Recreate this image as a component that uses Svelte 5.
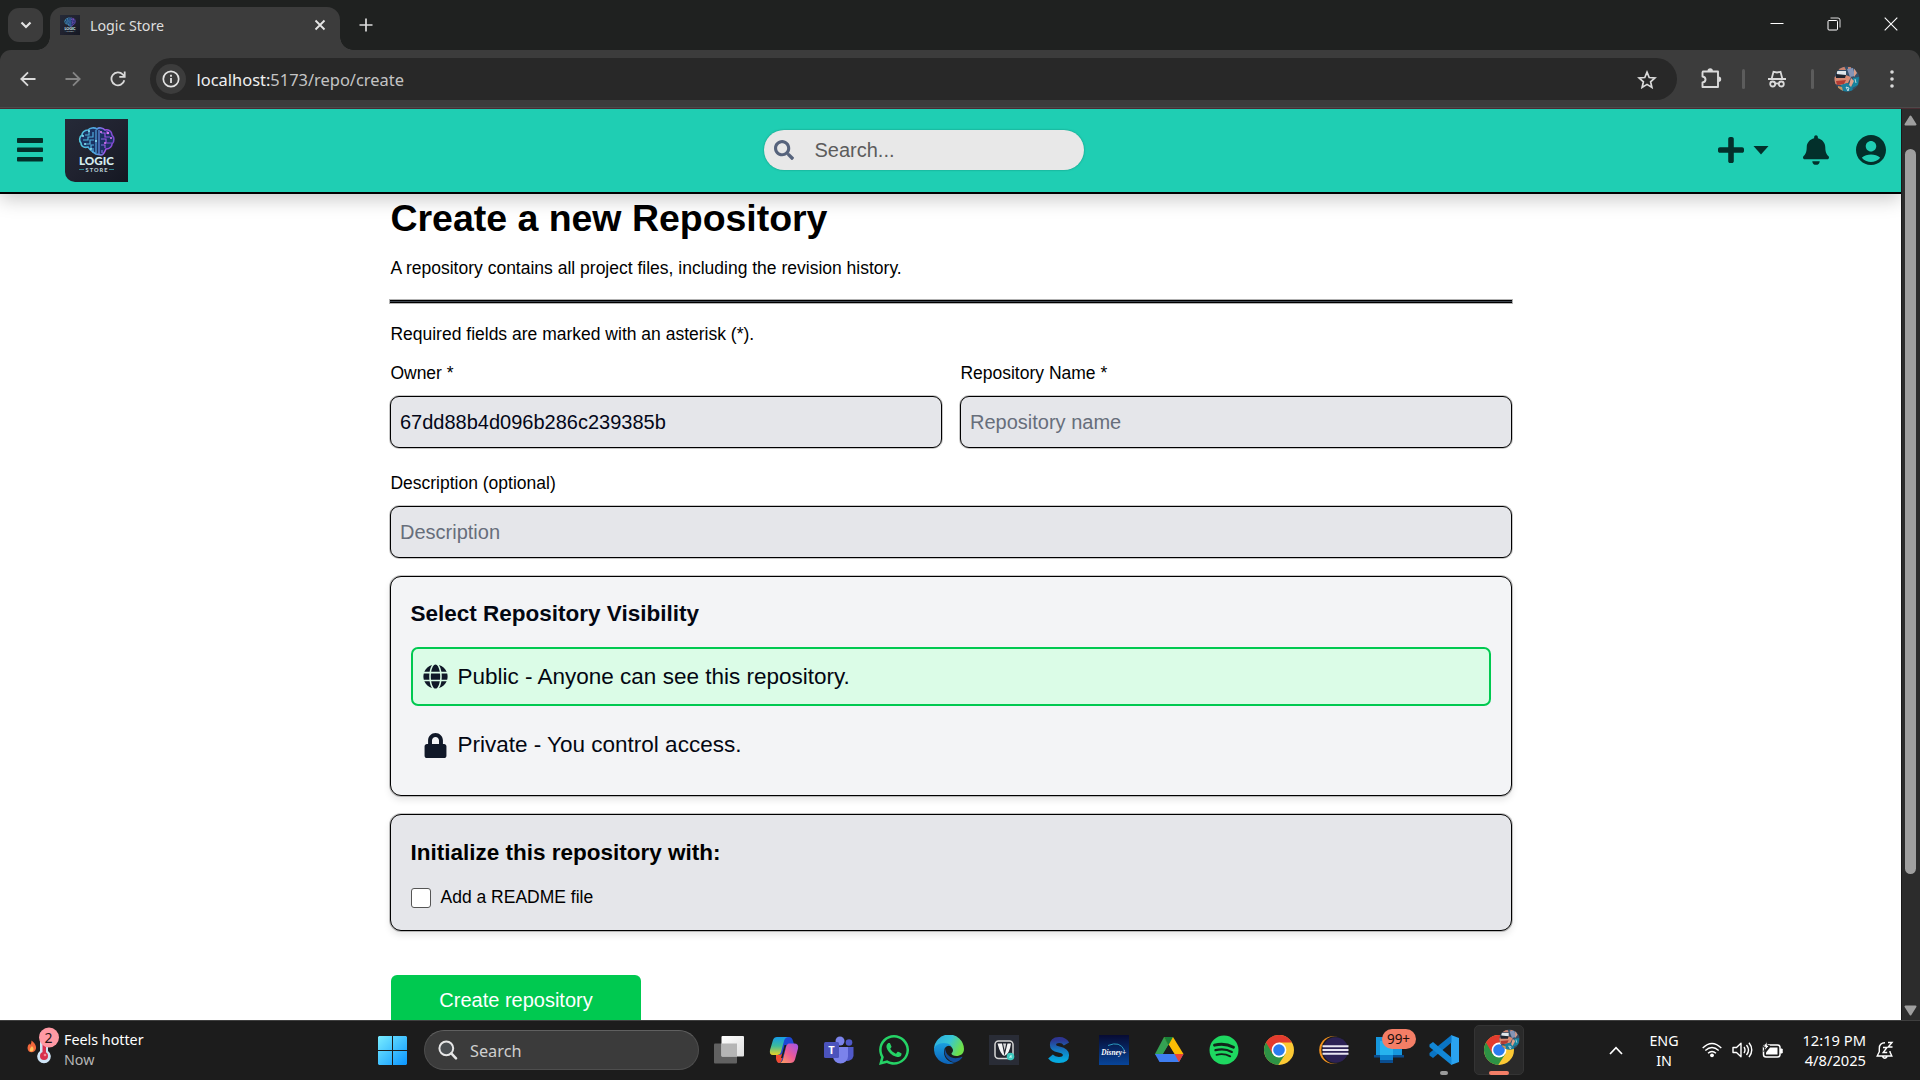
<script>
  const apps = ['taskview', 'copilot', 'teams', 'whatsapp', 'edge', 'jio', 's', 'disney', 'drive', 'spotify', 'chrome', 'eclipse', 'phone', 'vscode', 'chromeActive'];
  let owner = $state('67dd88b4d096b286c239385b');
  let repoName = $state('');
  let description = $state('');
  let readme = $state(false);
</script>

{#snippet brain()}
  <svg class="fill" viewBox="0 0 63 63">
    <defs>
      <linearGradient id="lbg" x1="0" y1="0" x2="1" y2="1"><stop offset="0" stop-color="#252a38" /><stop offset=".5" stop-color="#20222f" /><stop offset="1" stop-color="#141722" /></linearGradient>
      <linearGradient id="bg1" x1="0" y1="0" x2="1" y2="0"><stop offset="0" stop-color="#4fc3d9" /><stop offset=".5" stop-color="#4f9fe0" /><stop offset=".75" stop-color="#a04fe6" /><stop offset="1" stop-color="#7a4ad0" /></linearGradient>
    </defs>
    <rect width="63" height="63" fill="url(#lbg)" />
    <path d="M32 10c-3-2-7-1-9 1-4 0-6 3-6 5-3 2-3 6-1 8 0 4 4 5 7 4 2 4 5 5 8 7l5 1c3 0 4-4 5-6 4 0 6-3 6-5 3-3 2-7 0-9 0-4-4-6-7-5-2-2-6-3-8-1z" fill="#1b3262" stroke="url(#bg1)" stroke-width="1.6" />
    <g fill="none" stroke="url(#bg1)" stroke-width="1.2">
      <path d="M31 11v23M34 11v24M28 13v5h-5v3h-5M29 21h-4v4h-5M29 26h-3v4M24 12v4h-4M36 14h4v4h5M36 20h5v4h6M36 26h4v3M42 12v3M37 31v3M28 29v5" />
    </g>
    <g fill="#8fe4f5"><circle cx="18" cy="17" r="1" /><circle cx="20" cy="25" r="1" /><circle cx="24" cy="12" r="1" /><circle cx="26" cy="30" r="1" /><circle cx="31" cy="22" r="1" /></g>
    <g fill="#e07af7"><circle cx="36" cy="13" r="1.1" /><circle cx="43" cy="14" r="1.2" /><circle cx="46" cy="19" r="1" /><circle cx="40" cy="24" r="1" /></g>
    <text x="31.5" y="46.3" text-anchor="middle" textLength="35" lengthAdjust="spacingAndGlyphs" font-family="Lato, sans-serif" font-weight="900" font-size="10.5" fill="#d5edf0">LOGIC</text>
    <text x="31.5" y="52.6" text-anchor="middle" textLength="22" font-family="Lato, sans-serif" font-weight="900" font-size="5.6" fill="#b9ced3">STORE</text>
    <path d="M14 50.5h5M44 50.5h5" stroke="#2e8791" stroke-width="1" />
  </svg>
{/snippet}

{#snippet avatar()}
  <svg class="fill" viewBox="0 0 26 26">
    <defs><clipPath id="av"><circle cx="13" cy="13" r="12.5" /></clipPath></defs>
    <g clip-path="url(#av)">
      <rect width="26" height="26" fill="#35506a" />
      <path d="M0 11l9-3 8 3-3 6-6 2-8-1z" fill="#d98a72" />
      <path d="M3 5h9v4H3z" fill="#dfe6ea" /><path d="M2 8l10 1-1 3H2z" fill="#20252f" />
      <path d="M5 0h5l2 4H4zM14 1h3v4h-3z" fill="#c9826d" />
      <path d="M13 3l6-1 2 8-5 1z" fill="#8594b6" /><path d="M20 2l3 5-3 4z" fill="#d99b86" />
      <path d="M2 15l10-1-2 4-7 1z" fill="#b23c34" /><path d="M7 19l6-2 5 2 1 7H8z" fill="#1a7f9d" />
      <path d="M19 12l6-1-1 8-6 3z" fill="#16849f" /><path d="M17 12l3 3-3 6-2-2z" fill="#dda18b" />
      <path d="M4 20l4 1 1 4H4z" fill="#c9975f" /><path d="M12 21l3 1-1 3zM21 13l1 4" stroke="#e5eef0" fill="none" stroke-width=".8" />
    </g>
  </svg>
{/snippet}

{#snippet chrome()}
  <circle cx="15" cy="15" r="15" fill="#fcc934" />
  <path d="M15 15L2 7.5A15 15 0 0 0 14.2 30L21.5 18.8z" fill="#2d9245" />
  <path d="M15 15L2 7.5A15 15 0 0 1 28 7.5H15z" fill="#e33b2e" />
  <path d="M2 7.5L8.5 18.7 15 15V7.5z" fill="#e33b2e" />
  <circle cx="15" cy="15" r="7.4" fill="#fff" /><circle cx="15" cy="15" r="5.8" fill="#2b7cf0" />
{/snippet}

<div class="screen">
  <header class="tabstrip">
    <button class="tabsearch" aria-label="Search tabs"><svg width="12" height="8" viewBox="0 0 12 8"><path d="M1.5 1.5L6 6l4.500-4.500" fill="none" stroke="#e3e3e3" stroke-width="2.200" /></svg></button>
    <div class="tab">
      <span class="favicon">{@render brain()}</span>
      <span class="tabtitle">Logic Store</span>
      <svg width="12" height="12" viewBox="0 0 12 12"><path d="M1.500 1.500l9 9M10.500 1.500l-9 9" stroke="#e6e6e6" stroke-width="1.800" /></svg>
    </div>
    <svg class="newtab" width="14" height="14" viewBox="0 0 14 14"><path d="M7 .500v13M.500 7h13" stroke="#dcdcdc" stroke-width="1.700" /></svg>
    <div class="winbtns">
      <svg width="14" height="14" viewBox="0 0 14 14"><path d="M.500 6.500h13" stroke="#fff" stroke-width="1" /></svg>
      <svg width="14" height="14" viewBox="0 0 14 14"><rect x="1" y="3.500" width="9.500" height="9.500" rx="1" fill="none" stroke="#fff" /><path d="M3.500 1h7.500a2 2 0 0 1 2 2v7.500" fill="none" stroke="#ddd" /></svg>
      <svg width="14" height="14" viewBox="0 0 14 14"><path d="M.700.700l12.600 12.600M13.300.700L.700 13.300" stroke="#fff" stroke-width="1.100" /></svg>
    </div>
  </header>

  <div class="toolbar">
    <div class="navbtns">
      <svg width="16" height="16" viewBox="0 0 16 16"><path d="M15.500 8H2M8 1.300L1.300 8 8 14.700" fill="none" stroke="#dadada" stroke-width="1.800" /></svg>
      <svg width="16" height="16" viewBox="0 0 16 16"><path d="M.500 8H14M8 1.300L14.700 8 8 14.700" fill="none" stroke="#858585" stroke-width="1.800" /></svg>
      <svg width="16" height="16" viewBox="0 0 16 16"><path d="M14.300 9.300A6.500 6.500 0 1 1 12.800 3.500L14.500 5.500M14.700.500v5.300H9.300" fill="none" stroke="#dadada" stroke-width="1.800" /></svg>
    </div>
    <div class="urlbar">
      <span class="info"><svg width="18" height="18" viewBox="0 0 18 18"><circle cx="9" cy="9" r="7.700" fill="none" stroke="#e3e3e3" stroke-width="1.700" /><path d="M9 8v5M9 4.800v1.900" stroke="#e3e3e3" stroke-width="1.800" /></svg></span>
      <span class="url"><b>localhost:</b>5173/repo/create</span>
      <svg width="20" height="19" viewBox="0 0 20 19"><path d="M10 2.200l2.200 5.300 5.700.500-4.300 3.800 1.300 5.600-4.900-3-4.900 3 1.300-5.600L2.100 8l5.700-.500z" fill="none" stroke="#dadada" stroke-width="1.700" /></svg>
    </div>
    <div class="exts">
      <svg width="22" height="22" viewBox="0 0 22 22"><path d="M3 3.500h15v15.500H2.500v-4.500q3-.5 3-3t-3-3V4.500q0-1 1-1z" fill="none" stroke="#dadada" stroke-width="1.900" stroke-linejoin="round" /><path d="M7.500 3a2.700 2.700 0 0 1 5.400 0zM18.500 8.500a2.700 2.700 0 0 1 0 5.400z" fill="#dadada" /></svg>
      <i></i>
      <svg width="18" height="18" viewBox="0 0 18 18"><g fill="none" stroke="#dadada" stroke-width="1.800"><path d="M0 9h18M3.700 8.500L5.500 1.800l3.500.7 3.500-.7 1.800 6.700" /><circle cx="4.700" cy="14" r="2.500" /><circle cx="13.300" cy="14" r="2.500" /><path d="M7.200 13.500h3.600" /></g></svg>
      <i></i>
      <span class="me">{@render avatar()}</span>
      <svg width="4" height="18" viewBox="0 0 4 18" fill="#dadada"><circle cx="2" cy="2" r="1.800" /><circle cx="2" cy="9" r="1.800" /><circle cx="2" cy="16" r="1.800" /></svg>
    </div>
  </div>

  <div class="viewport">
    <div class="page">
      <nav>
        <div class="side">
          <svg class="menu" width="26" height="24" viewBox="0 0 26 24" fill="#03302b"><rect width="26" height="5" rx=".8" /><rect y="9.500" width="26" height="4.500" rx=".8" /><rect y="19" width="26" height="4.500" rx=".8" /></svg>
          <span class="logo">{@render brain()}</span>
        </div>
        <label class="search">
          <svg width="20" height="20" viewBox="0 0 512 512" fill="#56637c"><path d="M505 442.700L405.300 343c-4.500-4.500-10.600-7-17-7H372c27.600-35.300 44-79.700 44-128C416 93.100 322.900 0 208 0S0 93.100 0 208s93.100 208 208 208c48.300 0 92.700-16.400 128-44v16.300c0 6.400 2.500 12.500 7 17l99.700 99.700c9.400 9.400 24.600 9.400 33.900 0l28.300-28.300c9.400-9.400 9.400-24.600.1-34zM208 336c-70.700 0-128-57.200-128-128 0-70.700 57.200-128 128-128 70.700 0 128 57.200 128 128 0 70.700-57.200 128-128 128z" /></svg>
          <input placeholder="Search..." />
        </label>
        <div class="actions">
          <svg width="26" height="30" viewBox="0 0 448 512"><path d="M416 208H272V64c0-17.670-14.330-32-32-32h-32c-17.670 0-32 14.330-32 32v144H32c-17.670 0-32 14.330-32 32v32c0 17.670 14.330 32 32 32h144v144c0 17.670 14.330 32 32 32h32c17.670 0 32-14.330 32-32V304h144c17.670 0 32-14.330 32-32v-32c0-17.670-14.330-32-32-32z" /></svg>
          <svg class="caret" width="16" height="9" viewBox="0 0 16 9"><path d="M.500 0h15L8 8.500z" /></svg>
          <svg class="bell" width="26" height="30" viewBox="0 0 448 512"><path d="M224 512c35.320 0 63.970-28.650 63.970-64H160.030c0 35.350 28.650 64 63.970 64zm215.390-149.710c-19.320-20.760-55.470-51.990-55.470-154.290 0-77.700-54.480-139.900-127.940-155.160V32c0-17.670-14.320-32-31.980-32s-31.980 14.330-31.980 32v20.840C118.560 68.100 64.080 130.300 64.080 208c0 102.300-36.150 133.530-55.470 154.290-6 6.450-8.660 14.160-8.610 21.710.11 16.400 12.980 32 32.100 32h383.800c19.120 0 32-15.600 32.100-32 .05-7.550-2.610-15.270-8.610-21.710z" /></svg>
          <svg width="30" height="30" viewBox="2 2 20 20"><path d="M12 2C6.480 2 2 6.480 2 12s4.480 10 10 10 10-4.480 10-10S17.520 2 12 2zm0 4c1.930 0 3.500 1.570 3.500 3.500S13.930 13 12 13s-3.500-1.570-3.500-3.500S10.070 6 12 6zm0 14c-2.030 0-4.430-.82-6.140-2.880C7.550 15.800 9.680 15 12 15s4.450.8 6.140 2.120C16.430 19.180 14.030 20 12 20z" /></svg>
        </div>
      </nav>

      <main>
        <h1>Create a new Repository</h1>
        <p class="sub">A repository contains all project files, including the revision history.</p>
        <div class="rule"></div>
        <p class="req">Required fields are marked with an asterisk (*).</p>
        <div class="cols">
          <label class="field"><span>Owner *</span><input bind:value={owner} /></label>
          <label class="field"><span>Repository Name *</span><input placeholder="Repository name" bind:value={repoName} /></label>
        </div>
        <label class="field desc"><span>Description (optional)</span><input placeholder="Description" bind:value={description} /></label>

        <section class="card visibility">
          <h3>Select Repository Visibility</h3>
          <div class="option selected">
            <svg width="25" height="25" viewBox="0 0 496 512"><path d="M336.500 160C322 70.700 287.800 8 248 8s-74 62.700-88.500 152h177zM152 256c0 22.200 1.200 43.500 3.300 64h185.300c2.100-20.500 3.300-41.800 3.300-64s-1.200-43.500-3.300-64H155.300c-2.100 20.500-3.300 41.800-3.300 64zm324.700-96c-28.600-67.900-86.500-120.400-158-141.600 24.400 33.800 41.200 84.700 50 141.600h108zM177.200 18.400C105.800 39.600 47.800 92.100 19.300 160h108c8.700-56.900 25.500-107.800 49.900-141.600zM487.400 192H372.700c2.100 21 3.300 42.500 3.300 64s-1.200 43-3.300 64h114.600c5.500-20.500 8.600-41.800 8.600-64s-3.100-43.500-8.500-64zM120 256c0-21.500 1.200-43 3.300-64H8.600C3.200 212.500 0 233.800 0 256s3.200 43.500 8.600 64h114.600c-2-21-3.200-42.500-3.200-64zm39.500 96c14.500 89.300 48.700 152 88.500 152s74-62.700 88.500-152h-177zm159.300 141.600c71.400-21.200 129.400-73.700 158-141.600h-108c-8.800 56.900-25.600 107.800-50 141.600zM19.300 352c28.600 67.900 86.500 120.400 158 141.600-24.400-33.800-41.200-84.700-50-141.600h-108z" /></svg>
            <span>Public - Anyone can see this repository.</span>
          </div>
          <div class="option private">
            <svg width="25" height="25" viewBox="0 0 448 512"><path d="M400 224h-24v-72C376 68.200 307.800 0 224 0S72 68.200 72 152v72H48c-26.500 0-48 21.500-48 48v192c0 26.500 21.500 48 48 48h352c26.500 0 48-21.500 48-48V272c0-26.500-21.500-48-48-48zm-104 0H152v-72c0-39.700 32.300-72 72-72s72 32.300 72 72v72z" /></svg>
            <span>Private - You control access.</span>
          </div>
        </section>

        <section class="card init">
          <h3>Initialize this repository with:</h3>
          <label class="check"><input type="checkbox" bind:checked={readme} /><span>Add a README file</span></label>
        </section>

        <button class="create">Create repository</button>
      </main>
    </div>
    <div class="scrollbar">
      <svg width="13" height="11" viewBox="0 0 13 11"><path d="M6.500 1.500L11.500 9.500h-10z" fill="#9f9f9f" stroke="#9f9f9f" stroke-width="2" stroke-linejoin="round" /></svg>
      <div class="thumb"></div>
      <svg width="13" height="11" viewBox="0 0 13 11"><path d="M6.500 9.500L1.500 1.500h10z" fill="#9f9f9f" stroke="#9f9f9f" stroke-width="2" stroke-linejoin="round" /></svg>
    </div>
  </div>

  <footer>
    <div class="weather">
      <svg width="32" height="38" viewBox="0 0 32 38">
        <path d="M13 6q4-5 8 0v18a6.800 6.800 0 1 1-8 0z" fill="#cfe5f6" />
        <path d="M15.500 10h3.500v16h-3.500z" fill="#d8304e" /><circle cx="17" cy="29" r="4" fill="#d8304e" /><circle cx="18" cy="28" r="1.300" fill="#f28a98" />
        <path d="M4.500 13.500q5 4 4.500 8-1 3.800-4.500 3.800T.500 21q0-3 2-4.500l.5 1.500q1.800-1.500 1.500-4.500z" fill="#f2683c" /><path d="M5 19q2 2 1.500 4Q5 25.500 3 24q-1-2 2-5z" fill="#ffc05c" />
        <circle cx="22" cy="10.500" r="10" fill="#ff99a4" /><text x="21.500" y="15.500" text-anchor="middle" font-family="Noto Sans, sans-serif" font-size="14" fill="#241416">2</text>
      </svg>
      <div class="wtext"><span>Feels hotter</span><span class="dim">Now</span></div>
    </div>
    <div class="center">
      <svg class="start" width="29" height="29" viewBox="0 0 29 29"><defs><linearGradient id="win" x1="0" y1="0" x2="1" y2="1" gradientUnits="objectBoundingBox"><stop offset="0" stop-color="#79edff" /><stop offset="1" stop-color="#0a95ff" /></linearGradient></defs><path d="M1 0h13v14H0V1zM15 0h13l1 1v13H15zM0 15h14v14H1l-1-1zM15 15h14v13l-1 1H15z" fill="url(#win)" /></svg>
      <div class="tasksearch">
        <svg width="20" height="20" viewBox="0 0 20 20"><circle cx="8.300" cy="8.300" r="6.900" fill="#4a4f52" stroke="#e6e6e6" stroke-width="2" /><path d="M13.300 13.300l4.700 5" stroke="#e6e6e6" stroke-width="2.500" stroke-linecap="round" /></svg>
        <span>Search</span>
      </div>
      {#each apps as app}
        <div class="app" class:active={app === 'chromeActive'}>
          <svg width="30" height="30" viewBox="0 0 30 30">
            {#if app === 'taskview'}
              <defs><linearGradient id="tv" x1="0" y1="0" x2="1" y2="1"><stop offset="0" stop-color="#fff" /><stop offset="1" stop-color="#dedede" /></linearGradient></defs>
              <rect x="0" y="8.500" width="23" height="20" rx="1" fill="#616161" /><rect x="7.500" y="1" width="22.500" height="20.500" rx="1" fill="url(#tv)" /><path d="M7.500 8.500H23v13H7.500z" fill="#b5b5b5" />
            {:else if app === 'copilot'}
              <defs>
                <linearGradient id="cp1" x1="0" y1="0" x2="0" y2="1"><stop offset="0" stop-color="#169be8" /><stop offset=".5" stop-color="#3dbb9b" /><stop offset="1" stop-color="#e9d326" /></linearGradient>
                <linearGradient id="cp2" x1="1" y1="0" x2="0" y2="1"><stop offset="0" stop-color="#9a54ee" /><stop offset=".5" stop-color="#ed5a96" /><stop offset="1" stop-color="#ffa758" /></linearGradient>
              </defs>
              <path d="M11 2h9q3 0 4 4l1 3h-4q-3 0-4 3l-3 12q-1 4-5 4z" fill="#1d48d5" />
              <path d="M8 2h12q-4 0-5 4l-3 11q-1 3-4 3H4q-4 0-3-5L4 5q1-3 4-3z" fill="url(#cp1)" />
              <path d="M7 20h3q3 0 4-3l-1 7q-1 4-3 4-2 0-3-4z" fill="#f04a32" />
              <path d="M17.500 10l-4 13h-1.500l3.500-13z" fill="#1c1c1c" />
              <path d="M20 8.500h5q5 0 4 5l-3 11q-1 3.500-5 3.500H10q3 0 4-4l3-12q1-3.500 3-3.500z" fill="url(#cp2)" />
            {:else if app === 'teams'}
              <circle cx="16" cy="6" r="4.500" fill="#7b83eb" /><circle cx="25" cy="7.500" r="3.300" fill="#5059c9" /><path d="M20 12h9.500v9a6 6 0 0 1-9 4z" fill="#5059c9" /><path d="M9 12h15v9.500a7.500 7 0 0 1-15 0z" fill="#7b83eb" /><rect y="7" width="15" height="16" rx="1.500" fill="#4b53bc" /><text x="7.500" y="19" text-anchor="middle" font-family="Open Sans, sans-serif" font-weight="700" font-size="11" fill="#fff">T</text>
            {:else if app === 'whatsapp'}
              <path transform="scale(.067) translate(0 -32)" fill="#25d366" d="M380.900 97.100C339 55.100 283.200 32 223.900 32c-122.400 0-222 99.600-222 222 0 39.100 10.200 77.300 29.600 111L0 480l117.700-30.900c32.400 17.700 68.900 27 106.100 27h.1c122.300 0 224.100-99.600 224.100-222 0-59.300-25.200-115-67.100-157zm-157 341.600c-33.200 0-65.700-8.900-94-25.700l-6.700-4-69.800 18.300L72 359.200l-4.400-7c-18.500-29.400-28.200-63.300-28.200-98.200 0-101.700 82.800-184.500 184.600-184.500 49.300 0 95.600 19.200 130.400 54.100 34.800 34.900 56.200 81.200 56.100 130.500 0 101.800-84.900 184.600-186.600 184.600zm101.200-138.200c-5.500-2.800-32.800-16.200-37.900-18-5.100-1.900-8.800-2.800-12.500 2.800-3.700 5.600-14.300 18-17.600 21.800-3.200 3.700-6.500 4.200-12 1.400-32.600-16.300-54-29.100-75.500-66-5.700-9.800 5.700-9.100 16.300-30.300 1.800-3.700.9-6.900-.5-9.700-1.400-2.800-12.500-30.100-17.100-41.200-4.500-10.800-9.100-9.300-12.500-9.500-3.200-.2-6.900-.2-10.600-.2-3.700 0-9.700 1.400-14.800 6.900-5.100 5.600-19.400 19-19.400 46.300 0 27.300 19.900 53.700 22.600 57.400 2.800 3.700 39.100 59.700 94.800 83.800 35.200 15.200 49 16.500 66.600 13.900 10.700-1.600 32.800-13.400 37.400-26.400 4.600-13 4.600-24.100 3.200-26.400-1.300-2.500-5-3.900-10.500-6.600z" />
            {:else if app === 'edge'}
              <defs><linearGradient id="ed" x1="0" y1="0" x2="1" y2=".4"><stop offset="0" stop-color="#2ba9e0" /><stop offset=".55" stop-color="#36c5d8" /><stop offset="1" stop-color="#6ee04a" /></linearGradient><linearGradient id="ed2" x1="0" y1="0" x2="0" y2="1"><stop offset="0" stop-color="#1a9fe0" /><stop offset="1" stop-color="#0c62b8" /></linearGradient></defs>
              <path d="M0 15A15 15 0 0 1 30 14c0 5-4 7-7.500 7-3 0-5-1-5-2.200 0-1 1.500-1.300 1.500-3.500 0-3-3.500-5.800-8-5.800-6 0-11 3.500-11 5.500z" fill="url(#ed)" />
              <path d="M0 15c0-4 4.500-7 10-7 5.500 0 9 3.500 9 7.300 0-3-2-4.500-4-4.500-4 0-5 4-5 6.500 0 6 5 10.500 11 10.500A15 15 0 0 1 0 15z" fill="url(#ed2)" />
              <path d="M11 13c-2 6 2 13 10 14.500Q26 26 28.300 22.300q.3-.8-.5-.5C20 25.500 12 22 11 13z" fill="#124f9c" />
            {:else if app === 'jio'}
              <rect width="30" height="30" fill="#292c36" /><rect x="6" y="6" width="18" height="17.500" rx="3.500" fill="#22252e" stroke="#d5d5d5" stroke-width="1.500" /><path d="M8.500 8.500h4.500l2.500 12.500q-4-1-7-12.500zM22 8.500h-3.500L15.500 21q5-2 6.500-12.500z" fill="#f5f5f5" /><path d="M14 8.500l1.700 7 1.500-7z" fill="#f5f5f5" opacity=".85" /><circle cx="21.500" cy="21.500" r="3.800" fill="#3cc9be" /><path d="M20.500 22.500l1.500-2v2.500" stroke="#d5fffb" fill="none" />
            {:else if app === 's'}
              <defs><linearGradient id="sg" x1="0" y1="0" x2="0" y2="1"><stop offset="0" stop-color="#2d3591" /><stop offset=".5" stop-color="#1478c0" /><stop offset="1" stop-color="#06a9df" /></linearGradient></defs>
              <path d="M22.500 9Q20 4.800 15 5q-6 .2-6 5 0 3.300 6 4.500 7 1.500 7 5.500 0 5-7 5-5.500 0-8.500-3.500" fill="none" stroke="url(#sg)" stroke-width="6.200" />
            {:else if app === 'disney'}
              <defs><linearGradient id="dg" x1="0" y1="0" x2="0" y2="1"><stop offset="0" stop-color="#070b33" /><stop offset="1" stop-color="#07459a" /></linearGradient></defs>
              <rect width="30" height="30" fill="url(#dg)" /><path d="M9 10.500Q21 5.500 25.500 15.500" fill="none" stroke="#2a9bc0" stroke-width="1" /><text x="14.700" y="19.500" text-anchor="middle" font-family="Liberation Serif, serif" font-style="italic" font-weight="700" font-size="7.300" fill="#fff">Disney+</text>
            {:else if app === 'drive'}
              <path d="M10 2h9L14.500 10 5.500 24.500 1 19z" fill="#34a153" /><path d="M10 2h9l-4.500 8z" fill="#167a3a" /><path d="M10 2h9l10.500 17h-9z" fill="#fbbc04" /><path d="M10 2l4.500 8L19 2z" fill="#188038" /><path d="M1 19h19.500h9L25 27H5.500z" fill="#3f7ef0" /><path d="M20.500 19h9L25 27z" fill="#ea4335" /><path d="M14.500 10L20 19H9.500z" fill="#1c1c1c" />
            {:else if app === 'spotify'}
              <circle cx="15" cy="15" r="14.500" fill="#1ed760" /><g fill="none" stroke="#10251a" stroke-linecap="round"><path d="M5.500 10.200q10-2.700 19 2" stroke-width="2.900" /><path d="M6.500 15.200q9-2.400 16.300 1.700" stroke-width="2.300" /><path d="M7.500 19.800q7.500-1.800 13.700 1.500" stroke-width="1.900" /></g>
            {:else if app === 'chrome' || app === 'chromeActive'}
              {@render chrome()}
            {:else if app === 'eclipse'}
              <circle cx="14" cy="15" r="13.800" fill="#f7941e" /><circle cx="16" cy="15" r="13.700" fill="#1c1c1c" /><circle cx="16.500" cy="15" r="12.800" fill="#2c2255" /><path d="M3.500 11.200h26M3.500 15h26M3.500 18.800h26" stroke="#e8e6f2" stroke-width="2" />
            {:else if app === 'phone'}
              <path d="M2 2h26v18H2z" fill="#1697dd" /><path d="M0 20h30v2.500H0z" fill="#0b4c8c" /><path d="M6 6h13v22H6z" fill="#26b3ee" /><path d="M6 20h13v5H6z" fill="#0c7fcc" /><path d="M6 25h13v3H6z" fill="#0a4d8f" />
            {:else if app === 'vscode'}
              <path d="M22 0L30 3v24l-8 3z" fill="#2aa3f0" /><path d="M22.500 0v7.500L4 23 .500 20.500V18z" fill="#0a74c4" /><path d="M22.500 30v-7.500L4 7 .500 9.500V12z" fill="#1287d6" />
            {/if}
          </svg>
          {#if app === 'phone'}<span class="badge">99+</span>{/if}
          {#if app === 'vscode'}<span class="dot"></span>{/if}
          {#if app === 'chromeActive'}<span class="mini">{@render avatar()}</span><span class="bar"></span>{/if}
        </div>
      {/each}
    </div>
    <div class="tray">
      <svg class="up" width="14" height="9" viewBox="0 0 14 9"><path d="M1 8l6-6.300L13 8" fill="none" stroke="#fff" stroke-width="1.700" /></svg>
      <div class="lang"><span>ENG</span><span>IN</span></div>
      <svg class="wifi" width="20" height="16" viewBox="0 0 20 16"><g fill="none" stroke="#fff" stroke-width="1.400"><path d="M.700 6Q10-3 19.300 6M3.300 8.600q6.700-6 13.400 0M6 11.300q4-3.600 8 0" /></g><circle cx="10" cy="13.300" r="1.900" fill="#fff" /></svg>
      <svg class="vol" width="21" height="18" viewBox="0 0 21 18"><g fill="none" stroke="#fff" stroke-width="1.400" stroke-linejoin="round"><path d="M1 6.500h3.500L9 2.300v13.400l-4.500-4.200H1zM12 6q2 3 0 6M14.500 4q4 5 0 10M17 1.800q5.500 7 0 14.400" /></g></svg>
      <svg class="bat" width="21" height="18" viewBox="0 0 21 18"><rect x="1.500" y="4" width="16.500" height="12" rx="2.500" fill="none" stroke="#fff" stroke-width="1.500" /><path d="M18.500 8h1.700v4h-1.700z" fill="#fff" stroke="#fff" /><path d="M8 6.500h7.500v7H4v-2z" fill="#fff" /><path d="M4.800.500L1 6h2.300L1.800 10.500 7.500 4.500H5.300z" fill="#fff" stroke="#1c1c1c" stroke-width=".9" /></svg>
      <div class="clock"><span>12:19 PM</span><span>4/8/2025</span></div>
      <svg class="zz" width="18" height="19" viewBox="0 0 18 19"><path d="M9 1.700Q3.300 1.700 3.300 7.500v3.200L1.200 15h14.600l-1.800-4V10M6.500 15.500q2.300 3.500 4.600 0" fill="none" stroke="#fff" stroke-width="1.400" /><path d="M7 6.500h4l-3.800 5h4M12 1.500h4l-3.800 4.500h4.300" fill="none" stroke="#fff" stroke-width="1.400" /></svg>
    </div>
  </footer>
</div>

<style>
  :global(body) { margin: 0; background: #1c1c1c; }
  * { box-sizing: border-box; }
  h1, h3, p { margin: 0; }
  svg { display: block; flex: none; }
  .fill { width: 100%; height: 100%; }
  .screen { width: 1920px; height: 1080px; display: flex; flex-direction: column; overflow: hidden; background: #1f2120; font-family: "Liberation Sans", Arial, sans-serif; }

  .tabstrip { position: relative; z-index: 1; height: 50px; flex: none; background: #1f2120; display: flex; align-items: flex-start; padding-left: 8px; }
  .tabsearch { width: 35px; height: 34px; margin: 8px 7px 0 0; border: 0; padding: 0; border-radius: 11px; background: #3c3c3c; display: flex; align-items: center; justify-content: center; }
  .tab { position: relative; width: 290px; height: 43px; margin-top: 7px; padding: 0 14px 7px 10px; background: #3c3c3c; border-radius: 13px 13px 0 0; display: flex; align-items: center; }
  .tab::before, .tab::after { content: ""; position: absolute; bottom: 0; width: 13px; height: 13px; }
  .tab::before { left: -13px; background: radial-gradient(circle at 0 0, transparent 12.500px, #3c3c3c 13px); }
  .tab::after { right: -13px; background: radial-gradient(circle at 100% 0, transparent 12.500px, #3c3c3c 13px); }
  .favicon { width: 20px; height: 20px; }
  .tabtitle { flex: 1; margin-left: 10px; padding-top: 1px; font: 14.300px/20px "Noto Sans", sans-serif; letter-spacing: -.05px; color: #dedede; }
  .newtab { margin: 18px 0 0 19px; }
  .winbtns { margin: 17px 22px 0 auto; display: flex; gap: 43px; }

  .toolbar { height: 59px; flex: none; background: linear-gradient(#3c3c3c 0 57px, #4b4a4a 57px 58px, #492d33 58px); border-radius: 11px 11px 0 0; display: flex; padding: 8px 26px 0 20px; }
  .navbtns { display: flex; gap: 29px; width: 130px; height: 41px; align-items: center; }
  .urlbar { width: 1527px; height: 42px; border-radius: 21px; background: #282828; display: flex; align-items: center; padding: 0 20px 0 6px; }
  .info { width: 30px; height: 30px; border-radius: 50%; background: #3c3c3c; display: flex; align-items: center; justify-content: center; }
  .url { flex: 1; margin-left: 10.500px; padding-top: 1px; font: 16.450px/24px "Noto Sans", sans-serif; color: #c4c4c4; }
  .url b { font-weight: 400; color: #f0f0f0; }
  .exts { flex: 1; height: 42px; display: flex; align-items: center; padding-left: 23px; }
  .exts i { width: 3px; height: 20px; background: #5c5c5c; border-radius: 2px; margin: 0 23px 0 20px; }
  .exts i + svg + i { margin: 0 20px 0 25px; }
  .me { width: 26px; height: 26px; margin-right: auto; }

  .viewport { height: 911px; flex: none; display: flex; background: #fff; }
  .page { width: 1901px; height: 911px; overflow: hidden; background: #fff; }
  nav { position: relative; height: 85px; background: #1fceb3; border-bottom: 2px solid #000; display: grid; grid-template-columns: 1fr 320px 1fr; align-items: center; padding: 0 15px 0 17px; box-shadow: 0 5px 18px rgba(0, 0, 0, .22); }
  .side { display: flex; align-items: center; gap: 22px; }
  .menu { margin-bottom: 2px; }
  .logo { width: 63px; height: 63px; border-radius: 0 0 0 10px; overflow: hidden; }
  .search { height: 40px; border-radius: 20px; background: #e8e8e8; margin: 0 0 1px -28px; width: 320px; display: flex; align-items: center; padding-left: 10px; gap: 21px; box-shadow: 0 0 2px rgba(0, 100, 80, .6); }
  .search input { border: 0; outline: 0; background: none; padding: 0; width: 230px; font: 20px "Liberation Sans", sans-serif; }
  .search input::placeholder { color: #5c5c5c; opacity: 1; }
  .actions { display: flex; align-items: center; justify-content: flex-end; margin-bottom: 1px; fill: #03302b; }
  .caret { margin: 0 34px 0 9px; }
  .bell { margin-right: 27px; }

  main { width: 1122px; margin-left: 390px; padding-top: 2px; color: #000; display: flex; flex-direction: column; }
  h1 { font-size: 37.500px; line-height: 45px; padding-left: .5px; letter-spacing: -.03px; }
  .sub { margin-top: 15px; font-size: 17.500px; line-height: 25px; padding-left: .4px; }
  .rule { margin-top: 19px; height: 3px; background: #3c444d; border: solid #000; border-width: 1px 0; box-shadow: 0 0 0 1px rgba(0, 0, 0, .3); }
  .req { margin-top: 19px; font-size: 17.500px; line-height: 25px; padding-left: .4px; }
  .cols { margin-top: 14px; display: grid; grid-template-columns: 1fr 1fr; gap: 18px; }
  .field { display: flex; flex-direction: column; gap: 10px; font-size: 17.500px; line-height: 25px; }
  .field span { padding-left: .4px; }
  .field input { height: 52px; border: 1px solid #000; border-radius: 9px; background: #e5e6ea; padding: 1px 9px 0; outline: 0; font: 20px "Liberation Sans", sans-serif; color: #030718; box-shadow: 0 0 0 1px rgba(0, 0, 0, .22); }
  .field input::placeholder { color: #676e7b; opacity: 1; }
  .desc { margin-top: 23px; }
  .card { margin-top: 18px; border: 1px solid #000; border-radius: 11px; padding: 0 20px; box-shadow: 0 0 0 1px rgba(0, 0, 0, .22), 0 4px 7px rgba(0, 0, 0, .1); }
  .visibility { height: 220px; background: #f3f4f6; padding-top: 22px; color: #030712; }
  .init { height: 117px; background: #e5e6ea; padding-top: 23px; }
  h3 { font-size: 22.500px; line-height: 30px; margin-left: -.5px; }
  .option { height: 59px; padding: 0 10px; border: 2px solid transparent; border-radius: 7px; display: flex; align-items: center; gap: 9.500px; font-size: 22.500px; fill: #101828; }
  .selected { margin: 18px 0 10px; border-color: #00c950; background: #dbfce7; }
  .private span { margin-bottom: 2px; }
  .check { height: 25px; margin-top: 17px; display: flex; align-items: center; gap: 9.500px; font-size: 17.500px; line-height: 25px; }
  .check input { appearance: none; width: 20px; height: 20px; margin: 1px 0 0; background: #fff; border: 1px solid #555; border-radius: 3px; }
  .create { align-self: flex-start; margin: 44px 0 0 1px; width: 250px; height: 50px; padding: 0; border: 0; border-radius: 6px; background: #00c950; color: #fff; font: 20px "Liberation Sans", sans-serif; }

  .scrollbar { flex: 1; background: #2c2c2c; border-left: 1px solid #1a1a1a; padding: 6px 1px 4px 0; display: flex; flex-direction: column; align-items: center; }
  .thumb { width: 11px; height: 725px; margin: 23px 0 auto; border-radius: 6px; background: #9f9f9f; }

  footer { height: 60px; flex: none; background: #1c1c1c; border-top: 1px solid #3f3f3f; display: flex; color: #fff; font-family: "Noto Sans", sans-serif; }
  .weather { width: 378px; display: flex; padding: 6px 0 0 27px; }
  .wtext { display: flex; flex-direction: column; margin-left: 5px; padding-top: 3px; font-size: 14.300px; line-height: 20px; }
  .dim { color: #b5b5b5; }
  .center { display: flex; align-items: center; height: 58px; }
  .start { margin-right: 17px; }
  .tasksearch { width: 275px; height: 40px; margin-right: 2.500px; border: 1px solid #4e4e4e; border-top-color: #606060; border-radius: 20px; background: #3b3b3b; display: flex; align-items: center; padding-left: 13px; gap: 12px; font-size: 16.300px; color: #cfcfcf; }
  .tasksearch span { margin-top: 1px; }
  .app { position: relative; width: 55px; height: 58px; display: flex; align-items: center; justify-content: center; }
  .active::before { content: ""; position: absolute; inset: 4px 2.500px; border: 1px solid #343434; border-radius: 5px; background: #2a2a2a; }
  .app svg { position: relative; }
  .badge { position: absolute; left: 20px; top: 8px; width: 34px; height: 20px; border-radius: 10px; background: #f47e66; color: #1e0f0c; font-size: 13.500px; line-height: 20px; text-align: center; }
  .dot { position: absolute; left: 23px; bottom: 4px; width: 8px; height: 4px; border-radius: 2px; background: #9a9a9a; }
  .bar { position: absolute; left: 17px; bottom: 4px; width: 20px; height: 4px; border-radius: 2px; background: #f47e66; }
  .mini { position: absolute; left: 27px; top: 8px; width: 21px; height: 21px; }
  .tray { flex: 1; display: flex; align-items: center; padding-right: 26px; justify-content: flex-end; font-size: 14.300px; line-height: 20px; height: 58px; }
  .up { margin-right: 26px; }
  .lang { display: flex; flex-direction: column; align-items: center; width: 30px; margin: 1px 23px 0 0; }
  .wifi { margin-right: 10px; }
  .vol { margin-right: 9px; }
  .bat { margin-right: 19px; }
  .clock { display: flex; flex-direction: column; align-items: flex-end; width: 64px; white-space: nowrap; margin: 0 10px 0 0; font-size: 14.700px; }
</style>
